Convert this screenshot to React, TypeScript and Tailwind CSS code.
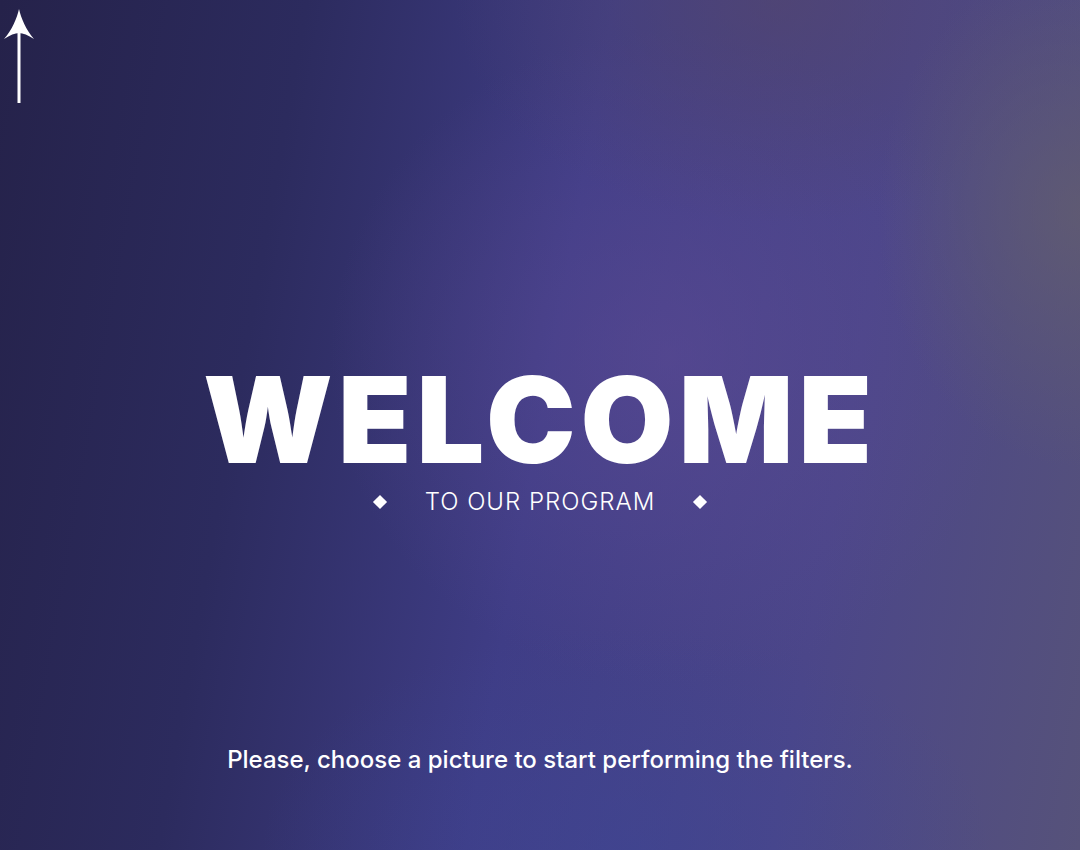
import React from 'react';

function UpArrow() {
  return (
    <svg width="40" height="104" viewBox="0 0 40 104" className="block">
      <rect x="17.5" y="28" width="3" height="75" fill="white" />
      <path d="M19 9 C21 18 26 30 34 39 C28 35 23 33 19 33 C15 33 10 35 4 39 C12 30 17 18 19 9 Z" fill="white" />
    </svg>
  );
}

function Diamond() {
  return <span className="block h-[10px] w-[10px] rotate-45 bg-white" />;
}

function App() {
  return (
    <div
      className="relative flex h-[850px] w-full flex-col overflow-hidden text-white"
      style={{ fontFamily: 'Inter, "Noto Sans", sans-serif' }}
    >
      {/* background layers */}
      <div className="absolute inset-0 bg-[linear-gradient(100deg,#25224a_0%,#2c2b5e_25%,#3f3d86_50%,#4b4689_75%,#56527a_100%)]" />
      <div className="absolute inset-0 bg-[radial-gradient(ellipse_45%_55%_at_62%_42%,rgba(95,75,150,0.55),transparent_70%)]" />
      <div className="absolute inset-0 bg-[radial-gradient(ellipse_40%_35%_at_72%_0%,rgba(85,70,105,0.6),transparent_75%)]" />
      <div className="absolute inset-0 bg-[radial-gradient(ellipse_25%_40%_at_100%_25%,rgba(100,95,110,0.7),transparent_75%)]" />
      <div className="absolute inset-0 bg-[radial-gradient(ellipse_45%_35%_at_58%_100%,rgba(60,70,150,0.5),transparent_75%)]" />

      <div className="relative flex h-full flex-col">
        <button className="w-[40px] cursor-pointer">
          <UpArrow />
        </button>

        <div className="mt-[268px] flex flex-col items-center">
          <h1 className="text-[120px] font-black leading-[96px] tracking-[5px]">WELCOME</h1>
          <div className="mt-[22px] flex items-center leading-[24px]">
            <Diamond />
            <span className="mx-[40px] text-[24px] font-light tracking-[1px]">TO OUR PROGRAM</span>
            <Diamond />
          </div>
        </div>

        <p className="mt-auto mb-[72px] text-center text-[24px] font-medium">
          Please, choose a picture to start performing the filters.
        </p>
      </div>
    </div>
  );
}

export default App;
